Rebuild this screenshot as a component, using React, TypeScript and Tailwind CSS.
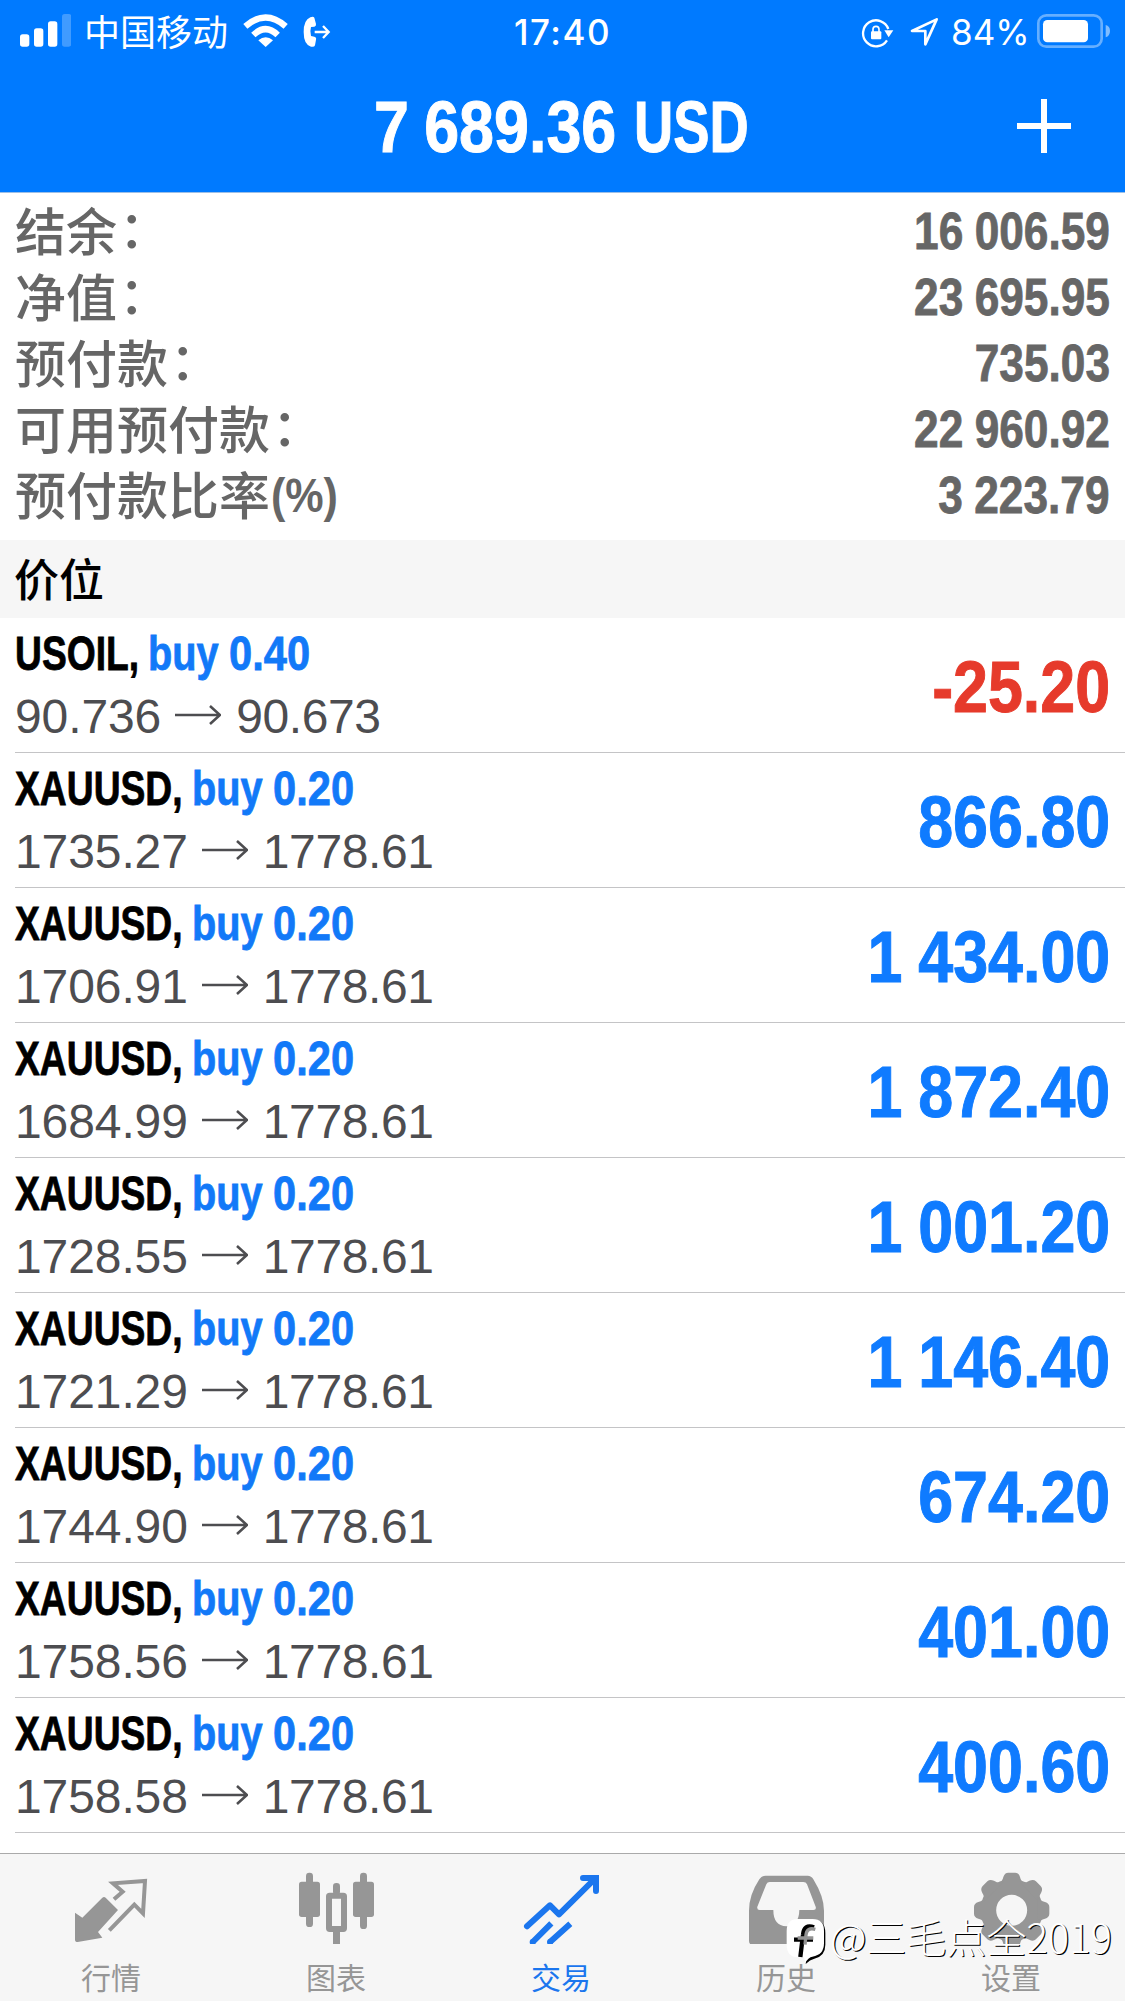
import type { ReactNode } from "react";

const summary = [
  { label: "结余", suffix: "：", value: "16 006.59" },
  { label: "净值", suffix: "：", value: "23 695.95" },
  { label: "预付款", suffix: "：", value: "735.03" },
  { label: "可用预付款", suffix: "：", value: "22 960.92" },
  { label: "预付款比率", suffix: "(%)", value: "3 223.79" },
];

const gold = { symbol: "XAUUSD,", symbolWidth: "w-[168px]", volume: "0.20", to: "1778.61" };

const positions = [
  { symbol: "USOIL,", symbolWidth: "w-[124px]", volume: "0.40", from: "90.736", to: "90.673", profit: "-25.20", loss: true },
  { ...gold, from: "1735.27", profit: "866.80" },
  { ...gold, from: "1706.91", profit: "1 434.00" },
  { ...gold, from: "1684.99", profit: "1 872.40" },
  { ...gold, from: "1728.55", profit: "1 001.20" },
  { ...gold, from: "1721.29", profit: "1 146.40" },
  { ...gold, from: "1744.90", profit: "674.20" },
  { ...gold, from: "1758.56", profit: "401.00" },
  { ...gold, from: "1758.58", profit: "400.60" },
];

function StatusBar() {
  return (
    <div className="grid h-[60px] grid-cols-3 items-center">
      <div className="flex items-center pl-5">
        <svg className="mb-[2px] h-[33px] w-[51px]" viewBox="60 40 153 99" fill="#fff">
          <rect x="60" y="101" width="28" height="37" rx="8" />
          <rect x="102" y="83" width="28" height="55" rx="8" />
          <rect x="144" y="62" width="28" height="76" rx="8" />
          <rect x="186" y="40" width="28" height="98" rx="8" opacity="0.25" />
        </svg>
        <span className="-mt-[2px] ml-[13px] w-[144px] whitespace-nowrap font-['Noto_Sans_CJK_SC',sans-serif] text-[36px] font-normal leading-[60px]">
          中国移动
        </span>
        <svg className="mb-[2px] ml-[15px] h-[33px] w-[45px]" viewBox="730 38 135 99">
          <g fill="none" stroke="#fff" strokeWidth="19">
            <path d="M737 75 Q798 22 858 75" />
            <path d="M761 101 Q798 66 834 101" />
          </g>
          <path d="M798 137 L776 117 Q798 99 820 117Z" fill="#fff" />
        </svg>
        <svg className="ml-[15px] mt-[2px] h-[32px] w-[28px]" viewBox="910 48 84 96">
          <path d="M932 52 Q941 48 944 53 L949 72 Q950 78 944 80 L934 81 Q930 94 934 108 L944 110 Q951 112 949 119 L946 136 Q944 142 934 140 Q912 134 912 96 Q912 60 932 52Z" fill="#fff" />
          <path d="M945 96 H985 M970 78 L987 96 L970 114" stroke="#fff" strokeWidth="7" fill="none" />
        </svg>
      </div>
      <div className="pt-[1px] text-center font-['Inter',sans-serif] text-[35px] font-medium leading-[60px] tracking-[1.5px]">17:40</div>
      <div className="flex items-center justify-end pr-[15px]">
        <svg className="mt-1 h-[30px] w-[33px]" viewBox="330 51 99 90" fill="#fff">
          <path d="M412 84 A39 39 0 1 0 408 118" fill="none" stroke="#fff" strokeWidth="7" />
          <path d="M400 88 H427 L413 109Z" />
          <rect x="360" y="91" width="31" height="24" rx="3" />
          <path d="M366 93 V85 Q366 76 375 76 Q384 76 384 85 V93" fill="none" stroke="#fff" strokeWidth="5" />
        </svg>
        <svg className="ml-4 mt-[2px] h-[30px] w-[29px]" viewBox="477 48 87 90">
          <path d="M557 55 L483 90 H523 V130Z" fill="none" stroke="#fff" strokeWidth="8" strokeLinejoin="round" />
        </svg>
        <span className="ml-[12px] w-[77px] whitespace-nowrap pt-[2px] font-['Inter',sans-serif] text-[35px] font-normal leading-[60px]">
          <span className="inline-block origin-left">84%</span>
        </span>
        <svg className="mb-[1px] ml-[9px] h-[34px] w-[73px]" viewBox="858 39 219 102">
          <rect x="862" y="43" width="190" height="94" rx="24" fill="none" stroke="#fff" strokeOpacity="0.4" strokeWidth="8" />
          <rect x="876" y="57" width="135" height="67" rx="13" fill="#fff" />
          <path d="M1064 72 Q1077 75 1077 90 Q1077 105 1064 109Z" fill="#fff" opacity="0.5" />
        </svg>
      </div>
    </div>
  );
}

function Header() {
  return (
    <header className="h-[193px] border-b border-[#9dbfe6] bg-[#007aff] text-white">
      <StatusBar />
      <div className="grid h-[132px] grid-cols-[374px_376px_1fr] items-center">
        <span />
        <div className="flex h-[84px] whitespace-nowrap pt-px font-['Liberation_Sans',sans-serif] text-[72px] font-bold leading-[84px] [-webkit-text-stroke:1px_currentColor]">
          <span className="w-[260px] shrink-0">
            <span className="inline-block origin-left scale-x-[0.872] [word-spacing:-2.5px]">7 689.36</span>
          </span>
          <span className="inline-block origin-left scale-x-[0.755]">USD</span>
        </div>
        <div className="flex justify-end pr-[54px]">
          <svg className="h-[54px] w-[54px]" viewBox="0 0 54 54" stroke="#fff" strokeWidth="6">
            <path d="M27 0V54M0 27H54" />
          </svg>
        </div>
      </div>
    </header>
  );
}

function Summary() {
  return (
    <section className="h-[347px] px-[15px] pt-[5px] text-[#666]">
      {summary.map((row) => (
        <div key={row.label} className="flex h-[66px] items-center justify-between whitespace-nowrap">
          <div className="flex items-center pb-[4px] font-['Noto_Sans_CJK_SC',sans-serif] text-[51px] font-medium leading-[61px]">
            {row.label}
            {row.suffix === "(%)" ? (
              <span className="origin-left scale-x-[0.88] pl-px pt-1 font-['Liberation_Sans',sans-serif] text-[49px] font-bold">(%)</span>
            ) : (
              <span className="-mt-[5px] ml-[2px]">{row.suffix}</span>
            )}
          </div>
          <div className="origin-right scale-x-[0.867] pt-px font-['Liberation_Sans',sans-serif] text-[51px] font-bold leading-[60px] [-webkit-text-stroke:0.8px_currentColor] [word-spacing:-1px]">
            {row.value}
          </div>
        </div>
      ))}
    </section>
  );
}

type Position = (typeof positions)[number] & { loss?: boolean };

function PositionRow({ position }: { position: Position }) {
  return (
    <li className="ml-[15px] flex h-[135.05px] items-center justify-between whitespace-nowrap border-b border-[#c4c4c6] pr-[15px] font-['Liberation_Sans',sans-serif]">
      <div className="pb-[2px]">
        <div className="flex h-[63px] items-center pb-px text-[49px] font-bold leading-[62px] text-black [-webkit-text-stroke:0.8px_currentColor]">
          <span className={position.symbolWidth}>
            <span className="inline-block origin-left scale-x-[0.76]">{position.symbol}</span>
          </span>
          <span className="ml-[9px] w-[81px] text-[#1279f8]">
            <span className="inline-block origin-left scale-x-[0.81]">buy</span>
          </span>
          <span className="origin-left scale-x-[0.85] text-[#1279f8]">{position.volume}</span>
        </div>
        <div className="flex h-[62px] items-center pt-px text-[48px] leading-[61px] text-[#4d4d50]">
          <span className="tracking-[-0.1px]">{position.from}</span>
          <svg className="mb-[3px] ml-[14px] mr-[15px] h-5 w-[46px]" viewBox="0 0 46 20" fill="none" stroke="currentColor" strokeWidth="2.6">
            <path d="M0 10H45M35 1L45 10L35 19" />
          </svg>
          <span className="tracking-[-0.4px]">{position.to}</span>
        </div>
      </div>
      <div className={`origin-right scale-x-[0.872] pt-[4px] text-[72px] font-bold leading-[84px] [-webkit-text-stroke:1px_currentColor] [word-spacing:-2px] ${position.loss ? "text-[#e63a2b]" : "text-[#0f7bff]"}`}>
        {position.profit}
      </div>
    </li>
  );
}

function Tab({ label, viewBox, active, children }: { label: string; viewBox: string; active?: boolean; children: ReactNode }) {
  return (
    <div className={`flex flex-col items-center ${active ? "text-[#1b76ee]" : "text-[#969696]"}`}>
      <svg className="h-[90px] w-[225px]" viewBox={viewBox} fill="currentColor">
        {children}
      </svg>
      <span className="mt-[11px] pr-[3px] font-['Noto_Sans_CJK_SC',sans-serif] text-[30px] leading-[42px]">{label}</span>
    </div>
  );
}

function TabBar() {
  return (
    <nav className="relative grid h-[148px] shrink-0 grid-cols-5 overflow-hidden border-t border-[#aaa] bg-[#f6f6f6]">
      <Tab label="行情" viewBox="0 102 675 270">
        <path d="M225 278 L247 293 L307 233 Q312 229 317 233 L354 270 L294 336 L307 353 L233 366 Q225 366 225 359Z" />
        <path d="M342 238 L368 215 L339 190 L435 183 L429 280 L403 254 L328 331" fill="none" stroke="currentColor" strokeWidth="12" />
      </Tab>
      <Tab label="图表" viewBox="675 102 675 270">
        <rect x="897" y="185" width="63" height="106" rx="8" />
        <rect x="918" y="158" width="21" height="163" rx="10" />
        <rect x="1059" y="185" width="63" height="106" rx="8" />
        <rect x="1080" y="158" width="21" height="169" rx="10" />
        <rect x="987" y="227" width="45" height="100" rx="2" fill="none" stroke="currentColor" strokeWidth="18" />
        <rect x="999" y="189" width="21" height="36" rx="10" />
        <rect x="999" y="325" width="21" height="56" rx="10" />
      </Tab>
      <Tab label="交易" viewBox="150 102 675 270" active>
        <g fill="none" stroke="currentColor" strokeWidth="18">
          <path d="M381 319 L450 256 L477 283 L585 176" strokeLinecap="round" strokeLinejoin="round" />
          <path d="M549 174 H588 V213" strokeLinecap="round" />
          <path d="M398 366 L454 310 M450 366 L511 311" />
        </g>
        <circle cx="398" cy="366" r="9" />
        <circle cx="450" cy="366" r="9" />
      </Tab>
      <Tab label="历史" viewBox="-150 102 675 270">
        <path
          fillRule="evenodd"
          d="M122 167 H248 Q259 167 265 178 Q297 230 297 272 V362 Q297 375 284 375 H85 Q72 375 72 362 V272 Q72 225 103 178 Q110 167 122 167Z M134 186 Q127 186 124 193 L97 260 Q95 270 104 270 H145 Q145 317 184 319 Q222 317 223 270 H265 Q275 270 272 260 L246 193 Q243 186 235 186Z"
        />
      </Tab>
      <Tab label="设置" viewBox="525 102 675 270">
        <circle cx="860" cy="271" r="70" fill="none" stroke="currentColor" strokeWidth="47" />
        {[0, 45, 90, 135, 180, 225, 270, 315].map((angle) => (
          <path key={angle} d="M818 194 Q832 186 835 171 Q839 158 850 158 H870 Q881 158 885 171 Q888 186 902 194Z" transform={`rotate(${angle} 860 271)`} />
        ))}
      </Tab>
      <div className="absolute left-[786px] top-[57px] flex items-start text-white">
        <svg className="mt-[7px] h-[48px] w-[40px] shrink-0 overflow-visible" viewBox="185 294 120 144">
          <path d="M223 301 H270 Q303 301 303 339 V374 Q303 408 270 416 Q257 419 244 432 L247 414 Z" fill="#000" />
          <path d="M220 297 H265 Q299 297 299 332 V370 Q299 405 264 410 Q253 412 243 427 L239 412 H220 Q187 410 187 374 V333 Q187 297 220 297Z" fill="#fff" />
          <path d="M269 322 Q239 311 236 344 L228 411 M209 359 H266" fill="none" stroke="#000" strokeWidth="13" />
          <path d="M273 328 Q248 321 245 344 L242 374 M220 354 H267" fill="none" stroke="#939393" strokeWidth="10" />
        </svg>
        <span className="ml-[4px] whitespace-nowrap font-['Noto_Sans_CJK_SC',sans-serif] text-[40px] font-light leading-[50px] [text-shadow:1.2px_1.2px_0_#000]">
          @三毛点全2019
        </span>
      </div>
    </nav>
  );
}

export default function App() {
  return (
    <div className="flex h-[2001px] w-[1125px] flex-col overflow-hidden bg-white">
      <Header />
      <Summary />
      <h2 className="h-[78px] shrink-0 bg-[#f6f6f6] pl-[14px] font-['Noto_Sans_CJK_SC',sans-serif] text-[45px] font-medium leading-[76px] text-black">价位</h2>
      <ul className="h-[1235px] shrink-0">
        {positions.map((position) => (
          <PositionRow key={position.from} position={position} />
        ))}
      </ul>
      <TabBar />
    </div>
  );
}
